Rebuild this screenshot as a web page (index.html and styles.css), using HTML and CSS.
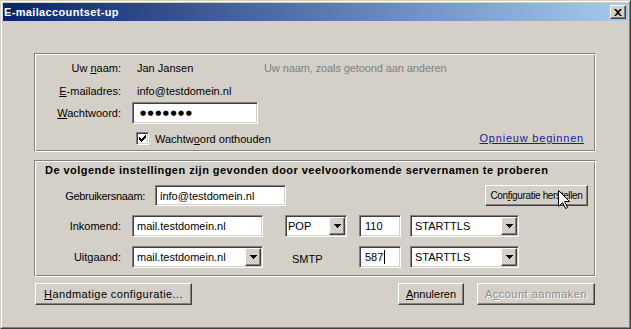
FILE: index.html
```html
<!DOCTYPE html>
<html>
<head>
<meta charset="utf-8">
<link rel="stylesheet" href="styles.css">
</head>
<body>
<div class="window">
  <div class="frame">
    <div class="titlebar">
      <span class="title">E-mailaccountset-up</span>
      <span class="close raised">
        <svg width="8" height="7" viewBox="0 0 8 7"><path d="M0 0h2l2 2 2-2h2L5 3.5 8 7H6L4 5 2 7H0l3-3.5z" fill="#000"/></svg>
      </span>
    </div>
    <div class="client">
      <div class="group g1">
        <div class="row r1">
          <span class="lbl">Uw <u>n</u>aam:</span>
          <span class="val">Jan Jansen</span>
          <span class="hint">Uw naam, zoals getoond aan anderen</span>
        </div>
        <div class="row r2">
          <span class="lbl"><u>E</u>-mailadres:</span>
          <span class="val">info@testdomein.nl</span>
        </div>
        <div class="row r3">
          <span class="lbl"><u>W</u>achtwoord:</span>
          <span class="field pw"><span class="dots">●●●●●●●</span></span>
        </div>
        <div class="row r4">
          <span class="check"><svg width="7" height="7" viewBox="0 0 7 7"><path d="M0 2h1v1h1v1h1v-1h1v-1h1v-1h1v-1h1v3h-1v1h-1v1h-1v1h-1v1h-1v-1h-1v-1h-1z" fill="#000"/></svg></span>
          <span class="checklbl">Wachtw<u>o</u>ord onthouden</span>
          <span class="link">Opnieuw beginnen</span>
        </div>
      </div>
      <div class="group g2">
        <div class="heading">De volgende instellingen zijn gevonden door veelvoorkomende servernamen te proberen</div>
        <div class="srow ru">
          <span class="lbl lbl-user">Gebruikersnaam:</span>
          <span class="field user"><span class="ftext">info@testdomein.nl</span></span>
          <span class="btn raised reset">Con<u>f</u>iguratie herstellen</span>
        </div>
        <div class="srow rin">
          <span class="lbl">Inkomend:</span>
          <span class="field host"><span class="ftext">mail.testdomein.nl</span></span>
          <span class="combo proto"><span class="ctext">POP</span><span class="arrow raised"><svg width="7" height="4" viewBox="0 0 7 4"><path d="M0 0h7v1h-1v1h-1v1h-1v1h-1v-1h-1v-1h-1v-1h-1z" fill="#000"/></svg></span></span>
          <span class="field port"><span class="ftext">110</span></span>
          <span class="combo sec"><span class="ctext">STARTTLS</span><span class="arrow raised"><svg width="7" height="4" viewBox="0 0 7 4"><path d="M0 0h7v1h-1v1h-1v1h-1v1h-1v-1h-1v-1h-1v-1h-1z" fill="#000"/></svg></span></span>
        </div>
        <div class="srow rout">
          <span class="lbl">Uitgaand:</span>
          <span class="combo host"><span class="ctext">mail.testdomein.nl</span><span class="arrow raised"><svg width="7" height="4" viewBox="0 0 7 4"><path d="M0 0h7v1h-1v1h-1v1h-1v1h-1v-1h-1v-1h-1v-1h-1z" fill="#000"/></svg></span></span>
          <span class="smtp">SMTP</span>
          <span class="field port"><span class="ftext">587</span><span class="caret"></span></span>
          <span class="combo sec"><span class="ctext">STARTTLS</span><span class="arrow raised"><svg width="7" height="4" viewBox="0 0 7 4"><path d="M0 0h7v1h-1v1h-1v1h-1v1h-1v-1h-1v-1h-1v-1h-1z" fill="#000"/></svg></span></span>
        </div>
      </div>
      <div class="buttons">
        <span class="btn raised manual"><u>H</u>andmatige configuratie...</span>
        <span class="btn raised cancel"><u>A</u>nnuleren</span>
        <span class="btn raised create disabled">A<u>c</u>count aanmaken</span>
      </div>
    </div>
  </div>
  <svg class="cursor" width="13" height="20" viewBox="0 0 13 20"><path d="M0.5 0.5V16.5L4.5 12.5L7.5 18.5L9.5 17.5L6.5 11.5H11.5Z" fill="#fff" stroke="#000" stroke-width="1" stroke-linejoin="miter"/></svg>
</div>
</body>
</html>
```

FILE: styles.css
```css
* { box-sizing: border-box; }
html, body { margin: 0; padding: 0; }
body {
  width: 631px;
  height: 329px;
  overflow: hidden;
  background: #d4d0c8;
  font-family: "Liberation Sans", Arial, sans-serif;
  font-size: 11px;
  color: #000;
}
u { text-decoration: underline; text-underline-offset: 1px; }

.window {
  position: relative;
  width: 631px;
  height: 329px;
  background: #d4d0c8;
  border: 1px solid;
  border-color: #d4d0c8 #404040 #404040 #d4d0c8;
}
.frame {
  height: 100%;
  border: 1px solid;
  border-color: #fff #808080 #808080 #fff;
  padding: 1px;
  display: flex;
  flex-direction: column;
}
.titlebar {
  height: 18px;
  flex: none;
  background: linear-gradient(to right, #0a246a, #a6caf0);
  display: flex;
  align-items: center;
  justify-content: space-between;
  padding: 0 2px 0 1px;
}
.title { color: #fff; font-weight: bold; font-size: 11px; letter-spacing: 0.35px; }

.raised {
  border: 1px solid;
  border-color: #fff #404040 #404040 #fff;
  box-shadow: inset -1px -1px #808080, inset 1px 1px #d4d0c8;
  background: #d4d0c8;
}
.close {
  width: 16px;
  height: 14px;
  display: flex;
  align-items: center;
  justify-content: center;
}
.close svg { display: block; margin-left: -1px; }

.client {
  flex: 1;
  padding: 32px 32px 0 31px;
}

.group {
  border: 1px solid;
  border-color: #808080 #fff #fff #808080;
  box-shadow: inset 1px 1px #fff, inset -1px -1px #808080;
}
.g1 { height: 99px; padding-top: 2px; }
.row { display: flex; align-items: center; height: 23px; }
.r3 { height: 22px; }
.r4 { height: 13px; margin-top: 8px; }
.lbl { width: 86px; text-align: right; margin-right: 11px; flex: none; }
.val { width: 132px; padding-left: 5px; flex: none; }
.hint { color: #808080; letter-spacing: -0.1px; }

.field {
  display: flex;
  align-items: center;
  background: #fff;
  border: 1px solid;
  border-color: #808080 #fff #fff #808080;
  box-shadow: inset 1px 1px #404040, inset -1px -1px #d4d0c8;
  flex: none;
}
.pw { width: 126px; height: 22px; padding-left: 7px; }
.dots { font-family: "DejaVu Sans", sans-serif; font-size: 7px; letter-spacing: 1.5px; }

.check {
  width: 13px;
  height: 13px;
  margin-left: 101px;
  background: #fff;
  border: 1px solid;
  border-color: #808080 #fff #fff #808080;
  box-shadow: inset 1px 1px #404040, inset -1px -1px #d4d0c8;
  display: flex;
  align-items: center;
  justify-content: center;
  flex: none;
}
.check svg { display: block; }
.checklbl { margin-left: 6px; }
.link {
  margin-left: auto;
  margin-right: 11px;
  color: #1b1ba0;
  text-decoration: underline;
  letter-spacing: 0.8px;
  position: relative;
  top: -1px;
}

.g2 { height: 117px; margin-top: 8px; padding-top: 3px; }
.heading { font-weight: bold; padding-left: 10px; height: 13px; line-height: 13px; letter-spacing: 0.46px; white-space: nowrap; }
.srow { display: flex; align-items: center; }
.ru { margin-top: 8px; height: 21px; }
.rin { margin-top: 9px; height: 22px; }
.rout { margin-top: 9px; height: 22px; }
.lbl-user { width: 110px; margin-right: 10px; letter-spacing: -0.3px; }
.user { width: 131px; height: 21px; padding-left: 4px; }
.ftext { white-space: nowrap; }

.btn {
  display: flex;
  align-items: center;
  justify-content: center;
  flex: none;
  white-space: nowrap;
}
.reset { width: 103px; height: 21px; margin-left: auto; margin-right: 7px; font-size: 10px; letter-spacing: -0.35px; }

.host { width: 131px; height: 22px; padding-left: 4px; }
.combo {
  display: flex;
  align-items: stretch;
  background: #fff;
  border: 1px solid;
  border-color: #808080 #fff #fff #808080;
  box-shadow: inset 1px 1px #404040, inset -1px -1px #d4d0c8;
  padding: 1px;
  flex: none;
  height: 22px;
}
.combo.host { padding: 1px; }
.ctext { flex: 1; display: flex; align-items: center; padding-left: 3px; white-space: nowrap; }
.arrow {
  width: 16px;
  flex: none;
  display: flex;
  align-items: center;
  justify-content: center;
}
.arrow svg { display: block; }
.proto { width: 62px; margin-left: 22px; }
.proto .ctext { padding-left: 1px; }
.port { width: 42px; height: 22px; margin-left: 12px; padding-left: 5px; }
.sec { width: 109px; margin-left: 9px; }
.sec .ctext { padding-left: 3px; }
.smtp { width: 62px; margin-left: 22px; padding-left: 7px; padding-top: 3px; flex: none; }
.caret { display: inline-block; width: 1px; height: 14px; background: #000; margin-left: 1px; }

.buttons { display: flex; margin-top: 6px; padding: 0 1px; }
.manual { width: 157px; height: 22px; letter-spacing: 0.4px; }
.cancel { width: 66px; height: 22px; margin-left: auto; }
.create { width: 118px; height: 22px; margin-left: 13px; letter-spacing: 0.5px; }
.disabled { color: #8a8a8a; text-shadow: 1px 1px #fff; }

.cursor { position: absolute; left: 557px; top: 189px; display: block; }
```
